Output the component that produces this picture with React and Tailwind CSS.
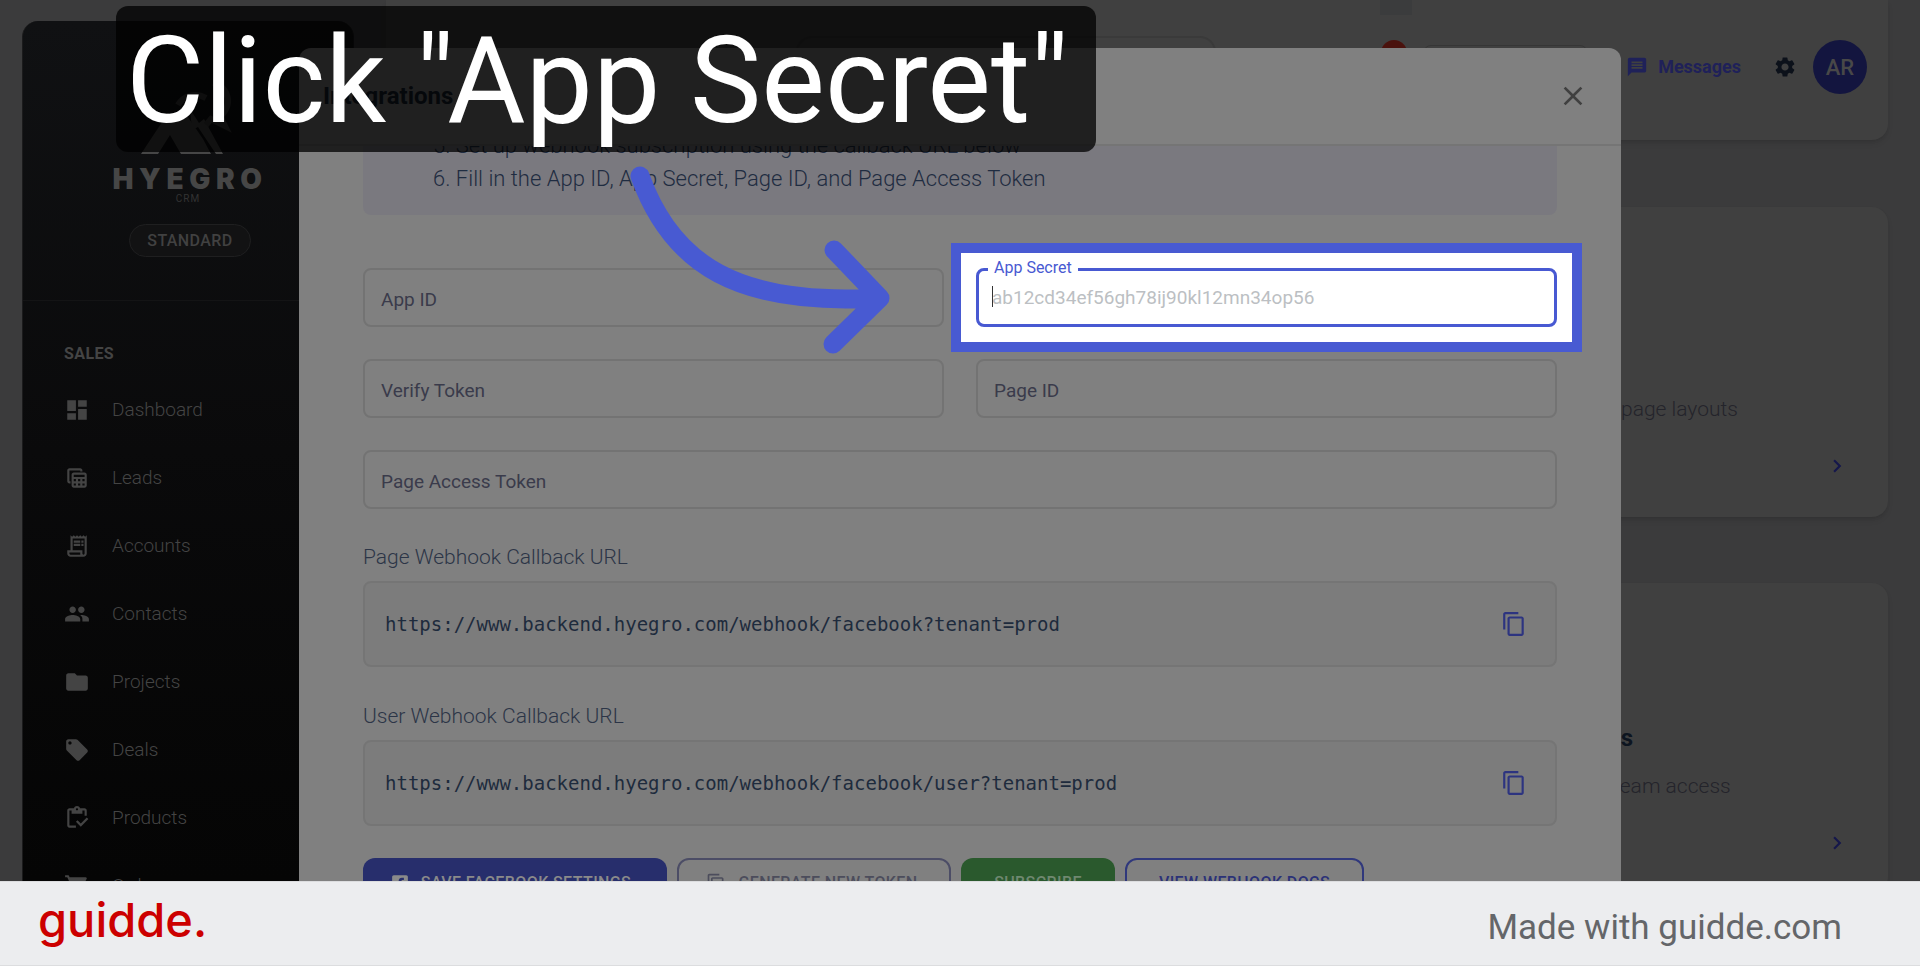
import React from "react";
import {
  MdDashboard,
  MdOutlineTableView,
  MdOutlineReceiptLong,
  MdPeople,
  MdFolder,
  MdLocalOffer,
  MdOutlineInventory,
  MdShoppingCart,
  MdContentCopy,
  MdClose,
  MdMessage,
  MdSettings,
  MdChevronRight,
} from "react-icons/md";
import { FaFacebookSquare } from "react-icons/fa";

const navItems = [
  { label: "Dashboard", Icon: MdDashboard },
  { label: "Leads", Icon: MdOutlineTableView },
  { label: "Accounts", Icon: MdOutlineReceiptLong },
  { label: "Contacts", Icon: MdPeople },
  { label: "Projects", Icon: MdFolder },
  { label: "Deals", Icon: MdLocalOffer },
  { label: "Products", Icon: MdOutlineInventory },
  { label: "Orders", Icon: MdShoppingCart },
];

function Sidebar() {
  return (
    <aside className="mt-[21px] flex w-[332px] shrink-0 flex-col rounded-t-2xl border-x border-[#1b1b1c] bg-linear-to-b from-[#101113] via-[#0a0a0b] to-[#050505]">
      <div className="flex flex-col items-center pt-[54px]">
        <svg className="h-20 w-[100px]" viewBox="0 0 100 80" fill="none">
          <path d="M3 79 30 38l6 9 7-15 22 32 8 15H43L32 60 20 79Z" fill="#464646" />
          <path d="M52 34l9 14 5-4 19 35h-7L60 52l-6 3Z" fill="#464646" />
          <path d="M40 30c5-9 17-13 28-7M75 8c16 3 21 24 6 34M68 50l5-6 14 7-4-8" stroke="#3a3a3a" strokeWidth="6" />
        </svg>
        <div className="mt-[9px] flex h-[30px] items-center pl-1 font-[Inter,sans-serif] text-[28px] font-black tracking-[0.2em] text-[#464646]">
          HYEGRO
        </div>
        <div className="h-3 text-[10px] leading-[10px] tracking-widest text-[#333333]">CRM</div>
        <div className="ml-1 mt-[18px] flex h-[33px] items-center rounded-full border border-[#1f1f20] bg-[#121213] px-[17px] text-base font-medium tracking-wide text-[#414141]">
          STANDARD
        </div>
      </div>
      <nav className="mt-[43px] border-t border-[#141415] px-[41px] pt-[41px]">
        <h2 className="text-base font-bold leading-6 tracking-wide text-[#444444]">SALES</h2>
        <ul className="mt-[10px]">
          {navItems.map(({ label, Icon }) => (
            <li key={label}>
              <a href="#" className="flex h-[68px] items-center gap-[22px] text-[19px] font-light text-[#444444]">
                <Icon className="size-[26px]" />
                {label}
              </a>
            </li>
          ))}
        </ul>
      </nav>
    </aside>
  );
}

function TopBar() {
  return (
    <header className="relative flex h-[140px] shrink-0 items-start justify-end rounded-b-2xl bg-[#404040] pr-[21px] shadow-md">
      <div className="absolute right-[476px] top-0 h-[15px] w-8 bg-[#3b3c3d]" />
      <div className="mt-9 h-[62px] w-[420px] rounded-2xl border-2 border-[#3a3a3a]" />
      <div className="ml-[165px] mt-10 size-[26px] rounded-full bg-[#4a120d]" />
      <div className="ml-4 mt-[45px] h-11 w-[165px] rounded-lg border border-[#363636]" />
      <div className="ml-[38px] flex h-[134px] items-center">
        <button className="flex items-center gap-[10px] text-lg font-bold text-[#1f2159]">
          <MdMessage className="size-[22px]" />
          Messages
        </button>
        <button aria-label="Settings" className="ml-8 text-[#0c111a]">
          <MdSettings className="size-6" />
        </button>
        <button className="ml-4 flex size-[54px] items-center justify-center rounded-full bg-[#13153f] text-[22px] font-medium text-[#484848]">
          AR
        </button>
      </div>
    </header>
  );
}

function SettingsCard({ title, text, className }) {
  return (
    <section className={className}>
      <h3 className="flex h-8 w-5 justify-end text-[24px] font-bold leading-8 text-[#0d1520]">{title}</h3>
      <p className="mt-4 whitespace-nowrap text-[21px] font-light leading-8 text-[#24242b]">{text}</p>
      <button aria-label="Open" className="mt-7 self-end text-[#15174b]">
        <MdChevronRight className="size-[26px]" />
      </button>
    </section>
  );
}

function Backdrop() {
  return (
    <div className="flex h-full bg-[#3b3b3c] pl-[22px]">
      <Sidebar />
      <div className="ml-8 mr-8 flex min-w-0 flex-1 flex-col">
        <TopBar />
        <SettingsCard
          className="mt-[67px] flex h-[310px] w-[355px] shrink-0 flex-col self-end rounded-2xl bg-[#404040] pl-[88px] pr-[38px] pt-[138px] shadow-md"
          title=""
          text="page layouts"
        />
        <SettingsCard
          className="mt-[66px] flex h-[310px] w-[355px] shrink-0 flex-col self-end rounded-2xl bg-[#404040] pl-20 pr-[38px] pt-[139px] shadow-md"
          title="Users"
          text="team access"
        />
      </div>
    </div>
  );
}

function Field({ label, wide }) {
  return (
    <input
      aria-label={label}
      placeholder={label}
      className={
        wide
          ? "col-span-2 h-[59px] w-full rounded-lg border-2 border-[#737373] bg-transparent px-4 pt-1 text-[19px] text-[#3a3b4b] outline-none placeholder:text-[#3a3b4b]"
          : "h-[59px] w-full rounded-lg border-2 border-[#737373] bg-transparent px-4 pt-1 text-[19px] text-[#3a3b4b] outline-none placeholder:text-[#3a3b4b]"
      }
    />
  );
}

function SecretField() {
  return (
    <div className="relative h-[59px]">
      <div className="absolute -inset-[25px] border-10 border-[#485ad2] bg-white" />
      <input
        id="app-secret"
        placeholder="ab12cd34ef56gh78ij90kl12mn34op56"
        className="relative h-full w-full rounded-lg border-3 border-[#4859d2] bg-white px-[13px] text-[19px] text-[#333] outline-none placeholder:text-[#bcbfc3]"
      />
      <label htmlFor="app-secret" className="absolute -top-3 left-3 bg-white px-[6px] text-base leading-6 text-[#4859d2]">
        App Secret
      </label>
      <div className="absolute left-4 top-[18px] h-[21px] w-px bg-[#333]" />
    </div>
  );
}

function UrlBlock({ label, url, id }) {
  return (
    <div className="flex flex-col">
      <h3 id={id} className="text-[21px] font-light leading-8 text-[#2c3547]">{label}</h3>
      <div className="mt-2 flex h-[86px] items-center justify-between rounded-lg border-2 border-[#757575] bg-[#7c7c7c] pl-5 pr-7">
        <code aria-labelledby={id} className="font-['DejaVu_Sans_Mono',monospace] text-[19px] text-[#1e2b3d]">
          {url}
        </code>
        <button type="button" aria-label="Copy URL" className="text-[#2d3480]">
          <MdContentCopy className="size-[26px]" />
        </button>
      </div>
    </div>
  );
}

function IntegrationsDialog() {
  return (
    <div role="dialog" aria-label="Integrations" className="flex h-[1000px] w-full max-w-[1322px] shrink-0 flex-col rounded-t-xl bg-[#808080]">
      <div className="flex h-[98px] shrink-0 items-center justify-between border-b-2 border-[#757575] pl-6 pr-8">
        <h2 className="text-2xl font-bold text-[#17202e]">Integrations</h2>
        <button aria-label="Close" className="text-[#404040]">
          <MdClose className="size-8" />
        </button>
      </div>
      <div className="flex flex-1 flex-col overflow-hidden px-16">
        <ol start="5" className="-mt-[17px] list-inside list-decimal rounded-b-lg bg-[#7a797f] pb-5 pl-[70px] text-[22px] font-light leading-[33px] text-[#1f2c41]">
          <li>Set up webhook subscription using the callback URL below</li>
          <li>Fill in the App ID, App Secret, Page ID, and Page Access Token</li>
        </ol>
        <form className="mt-[53px] flex flex-col">
          <div className="grid grid-cols-2 gap-8">
            <Field label="App ID" />
            <SecretField />
            <Field label="Verify Token" />
            <Field label="Page ID" />
            <Field label="Page Access Token" wide />
          </div>
          <div className="mt-8 flex flex-col gap-[33px]">
            <UrlBlock id="page-url" label="Page Webhook Callback URL" url="https://www.backend.hyegro.com/webhook/facebook?tenant=prod" />
            <UrlBlock id="user-url" label="User Webhook Callback URL" url="https://www.backend.hyegro.com/webhook/facebook/user?tenant=prod" />
          </div>
          <div className="mt-8 flex gap-[10px] text-base font-medium tracking-wide">
            <button type="button" className="flex h-[49px] w-[304px] items-center justify-center gap-3 rounded-xl bg-[#272e6c] pr-2 uppercase text-[#8a8a8a]">
              <FaFacebookSquare className="size-[18px]" />
              Save Facebook Settings
            </button>
            <button type="button" className="flex h-[49px] w-[274px] items-center justify-center gap-3 rounded-xl border-2 border-[#4c4d66] pr-1 uppercase text-[#4c4d5c]">
              <MdContentCopy className="size-5" />
              Generate New Token
            </button>
            <button type="button" className="h-[49px] w-[154px] rounded-xl bg-[#2a592d] uppercase text-[#6f8870]">
              Subscribe
            </button>
            <button type="button" className="h-[49px] w-[239px] rounded-xl border-2 border-[#30387c] uppercase text-[#2b3278]">
              View Webhook Docs
            </button>
          </div>
        </form>
      </div>
    </div>
  );
}

function Annotations() {
  return (
    <>
      <h1 className="absolute left-[116px] top-[6px] flex h-[146px] w-[980px] items-center whitespace-nowrap rounded-xl bg-black/75 pl-[10px] pt-1 text-[120px] leading-none text-white">
        Click "App Secret"
      </h1>
      <svg className="absolute left-[620px] top-[160px] h-[200px] w-[280px]" viewBox="620 160 280 200" fill="none">
        <path
          d="M640 176C672 265 738 306 878 298M834 250 880 298 833 344"
          stroke="#485ad2"
          strokeWidth="19"
          strokeLinecap="round"
          strokeLinejoin="round"
        />
      </svg>
    </>
  );
}

export default function App() {
  return (
    <div className="flex h-screen flex-col overflow-hidden font-[Roboto,sans-serif]">
      <main className="relative min-h-0 flex-1 overflow-hidden">
        <Backdrop />
        <div className="absolute inset-0 flex items-start justify-center overflow-hidden pt-12">
          <IntegrationsDialog />
        </div>
        <Annotations />
      </main>
      <footer className="flex h-[85px] shrink-0 items-center justify-between border-y border-[#dcdddf] bg-[#ecedef] pl-[38px] pr-[78px]">
        <div className="pb-2 font-[Inter,sans-serif] text-[47px] font-medium leading-none text-[#cc0000]">guidde.</div>
        <div className="pt-2 text-[35px] leading-10 text-[#646669]">Made with guidde.com</div>
      </footer>
    </div>
  );
}
